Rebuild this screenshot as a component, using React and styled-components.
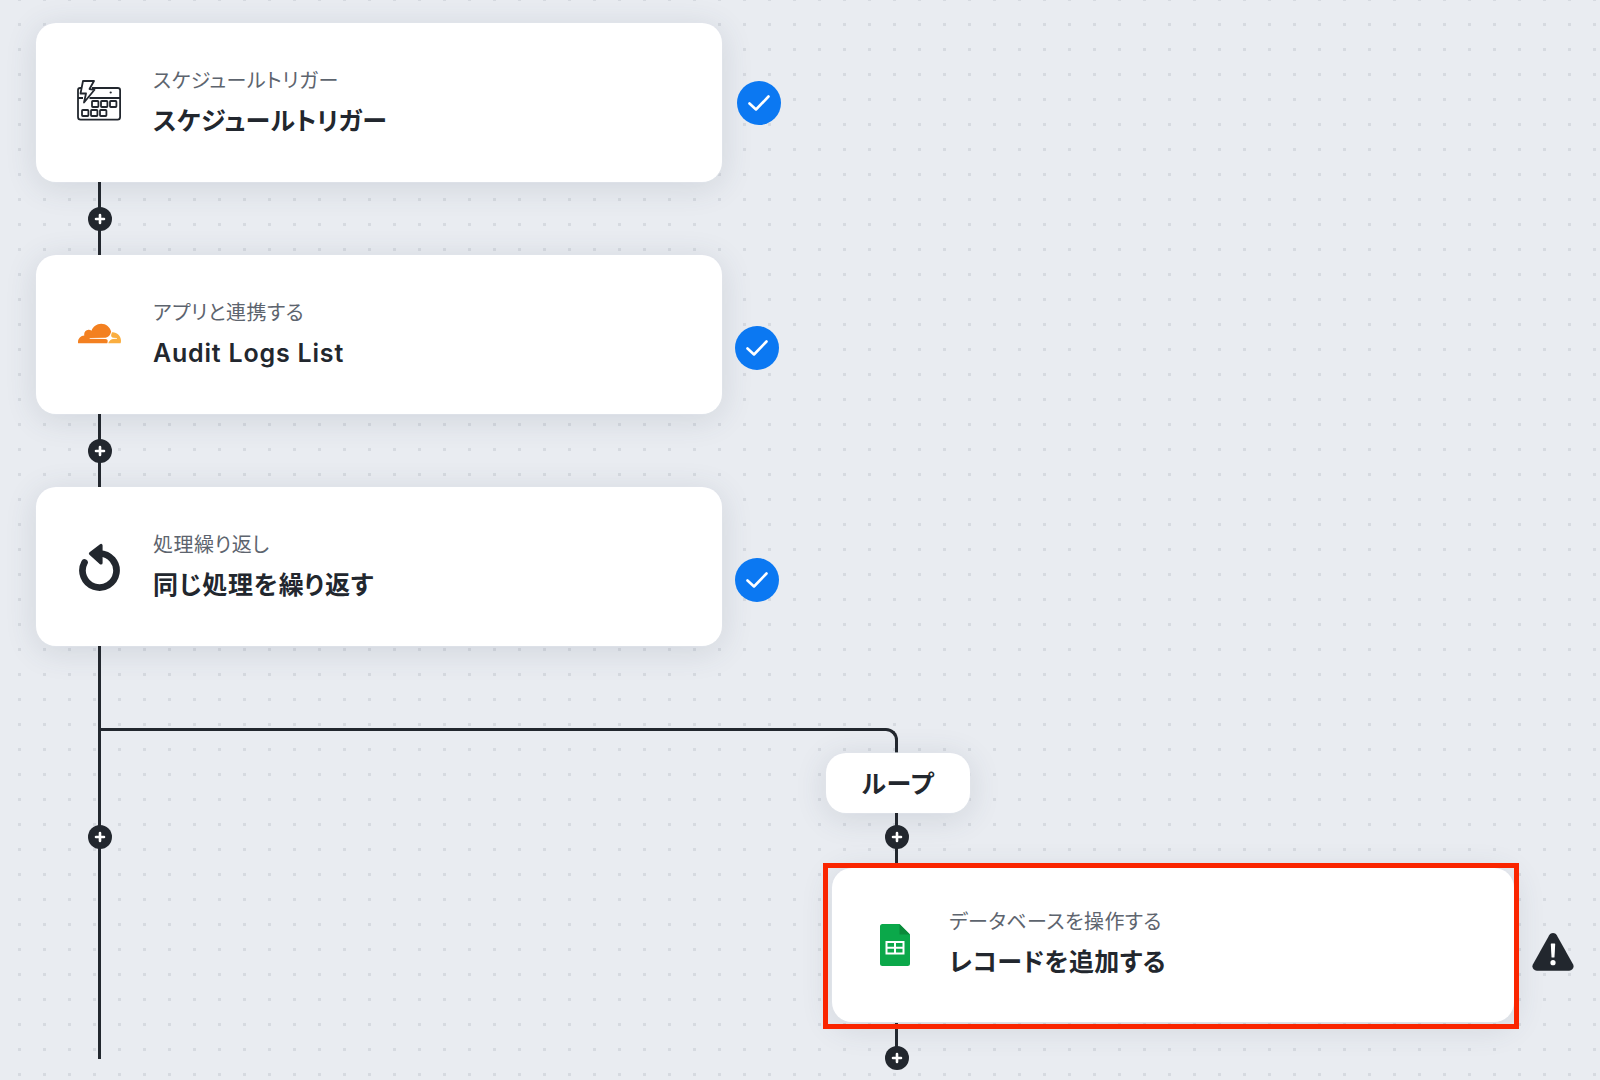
import React from "react";
import styled, { createGlobalStyle } from "styled-components";

const FONT = `Inter, "Noto Sans CJK JP", "Noto Sans", sans-serif`;
const INK = "#22272e";

const Global = createGlobalStyle`
  html, body { margin: 0; padding: 0; }
  body {
    font-family: ${FONT};
    font-feature-settings: "palt";
    background: #e9ecf1;
  }
`;

const Canvas = styled.main`
  position: relative;
  width: 1600px;
  height: 1080px;
  overflow: hidden;
  box-sizing: border-box;
  padding: 23px 0 0 36px;
  background-color: #e9ecf1;
  background-image: radial-gradient(circle, #d6dae0 1.4px, transparent 1.9px);
  background-size: 25px 25px;
  background-position: 7px 12px;
`;

const Step = styled.section`
  display: flex;
  align-items: center;
  gap: ${(p) => p.$gap}px;
`;

const Card = styled.article`
  width: ${(p) => p.$width || 686}px;
  height: ${(p) => p.$height || 159}px;
  box-sizing: border-box;
  display: flex;
  align-items: center;
  padding-left: 41px;
  background: #fff;
  border-radius: 20px;
  box-shadow: 0 0 0 1px rgba(225, 229, 235, 0.6), 0 5px 32px rgba(60, 70, 90, 0.14);
`;

const IconSlot = styled.div`
  width: 44px;
  height: 48px;
  flex: none;
  display: flex;
  align-items: center;
  justify-content: center;
  margin-right: 32px;
  transform: translateY(${(p) => p.$shift || 0}px);
`;

const Texts = styled.div`
  display: flex;
  flex-direction: column;
  gap: 10px;
  transform: translateY(${(p) => p.$shift || 0}px);
`;

const Label = styled.div`
  font-size: 20px;
  line-height: 27px;
  font-weight: 400;
  letter-spacing: 0.5px;
  color: #5d646e;
`;

const Title = styled.div`
  font-size: 25px;
  line-height: 32px;
  font-weight: 600;
  letter-spacing: ${(p) => p.$tracking}px;
  color: ${INK};
`;

const Badge = styled.div`
  width: 44px;
  height: 44px;
  flex: none;
  border-radius: 50%;
  background: #0b78f2;
  display: flex;
  align-items: center;
  justify-content: center;
  transform: translateY(${(p) => p.$shift}px);
`;

const Connector = styled.div`
  position: relative;
  width: 3px;
  height: 73px;
  margin-left: 62px;
  background: ${INK};
`;

const PlusDot = styled.button`
  position: absolute;
  left: ${(p) => p.$left ?? 1.5}px;
  top: ${(p) => p.$top}px;
  width: 24px;
  height: 24px;
  margin-left: -12px;
  padding: 0;
  border: 0;
  border-radius: 50%;
  background: ${INK};
  display: flex;
  align-items: center;
  justify-content: center;
`;

const Branching = styled.div`
  position: relative;
  margin-left: 62px;
  width: 1500px;
  height: 413px;
  box-sizing: border-box;
  border-left: 3px solid ${INK};
`;

const LoopLane = styled.div`
  display: flex;
  flex-direction: column;
  align-items: flex-start;
  padding-top: 82px;
`;

const Elbow = styled.div`
  width: 797px;
  height: 25px;
  box-sizing: border-box;
  border-top: 3px solid ${INK};
  border-right: 3px solid ${INK};
  border-top-right-radius: 12px;
`;

const LoopColumn = styled.div`
  margin-left: 722px;
  display: flex;
  flex-direction: column;
  align-items: flex-start;
`;

const Pill = styled.div`
  width: 144px;
  height: 60px;
  margin-left: 3px;
  border-radius: 20px;
  background: #fff;
  display: flex;
  align-items: center;
  justify-content: center;
  padding-bottom: 3px;
  box-sizing: border-box;
  font-size: 25px;
  font-weight: 600;
  letter-spacing: 0.8px;
  color: ${INK};
  box-shadow: 0 0 0 1px rgba(225, 229, 235, 0.6), 0 5px 32px rgba(60, 70, 90, 0.14);
`;

const LaneLine = styled.div`
  position: relative;
  width: 3px;
  height: ${(p) => p.$height}px;
  margin-left: 72px;
  margin-top: ${(p) => p.$overlap || 0}px;
  background: ${INK};
`;

const SelectedRow = styled.div`
  position: relative;
  z-index: 1;
  display: flex;
  align-items: flex-start;
  gap: 13px;
`;

const Selected = styled.div`
  width: 696px;
  height: 166px;
  box-sizing: border-box;
  padding: 5px 5px 7px 9px;
  outline: 5px solid #fa2500;
  outline-offset: -5px;
  display: flex;
`;

const WarnMark = styled.div`
  margin-top: 70px;
  line-height: 0;
`;

const Plus = () => (
  <svg width="12" height="12" viewBox="0 0 12 12">
    <path d="M6 2v8M2 6h8" stroke="#fff" strokeWidth="2.6" strokeLinecap="round" />
  </svg>
);

const Check = () => (
  <svg width="24" height="20" viewBox="0 0 24 20" fill="none">
    <path d="M2.500 10.500 9 16.500 21.500 3.500" stroke="#fff" strokeWidth="2.600" strokeLinecap="round" strokeLinejoin="round" />
  </svg>
);

const CalendarBolt = () => (
  <svg width="44" height="41" viewBox="0 0 44 41" fill="none" stroke={INK} strokeWidth="1.8" strokeLinejoin="round">
    <path d="M4 8H3.200C1.800 8 1 8.800 1 10.200V37c0 1.600 1 2.600 2.600 2.600h37c1.600 0 2.500-1 2.500-2.600V10.200C43.100 8.800 42.200 8 40.800 8H15" />
    <path d="M1 18h5M12.500 18H43" />
    <path d="M6 1H17L12.500 9 17.500 9.800 7 22.500 9 13.500H3.500z" fill="#fff" />
    <circle cx="33.700" cy="12.500" r="1.100" fill={INK} stroke="none" />
    <rect x="15" y="21" width="6.400" height="6" rx="0.800" />
    <rect x="24" y="21" width="6.400" height="6" rx="0.800" />
    <rect x="33" y="21" width="6.400" height="6" rx="0.800" />
    <rect x="5" y="30" width="6.400" height="6" rx="0.800" />
    <rect x="14" y="30" width="6.400" height="6" rx="0.800" />
    <rect x="23" y="30" width="6.400" height="6" rx="0.800" />
  </svg>
);

const Cloudflare = () => (
  <svg width="43" height="43" viewBox="0 0 24 24">
    <path fill="#f38020" d="M16.5088 16.8447c.1475-.5068.0908-.9707-.1553-1.3154-.2246-.3164-.6045-.499-1.0615-.5205l-8.6592-.1123a.1559.1559 0 0 1-.1333-.0713c-.0283-.042-.0351-.0986-.021-.1553.0278-.084.1123-.1484.2036-.1562l8.7359-.1123c1.0351-.0489 2.1601-.8868 2.5537-1.9136l.499-1.3013c.0215-.0561.0293-.1128.0147-.168-.5625-2.5463-2.835-4.4453-5.5499-4.4453-2.5039 0-4.6284 1.6177-5.3876 3.8614-.4927-.3658-1.1187-.5625-1.794-.499-1.2026.119-2.1665 1.083-2.2861 2.2856-.0283.31-.0069.6128.0635.894C1.5683 13.171 0 14.7754 0 16.7508c0 .1748.0142.3515.0352.5273.0141.083.0844.1475.1689.1475h15.9814c.0909 0 .1758-.0645.2032-.1553l.12-.4256z" />
    <path fill="#faae40" d="M19.2656 11.2813c-.0771 0-.1611 0-.2383.0112-.0566 0-.1054.0415-.127.0976l-.3378 1.1744c-.1475.5068-.0918.9707.1543 1.3164.2256.3164.6055.498 1.0625.5195l1.8437.1133c.0557 0 .1055.0263.1329.0703.0283.043.0351.1074.0214.1562-.0283.084-.1132.1485-.204.1553l-1.921.1123c-1.041.0488-2.1582.8867-2.5527 1.914l-.1406.3585c-.0283.0713.0215.1416.0986.1416h6.5977c.0771 0 .1474-.0489.169-.126.1122-.4082.1757-.837.1757-1.2803 0-2.6025-2.125-4.727-4.7344-4.727" />
  </svg>
);

const Replay = () => (
  <svg width="41" height="48" viewBox="0 0 41 48" fill="none">
    <path d="M5.500 19.500A17 17 0 1 0 20.500 10.500" stroke={INK} strokeWidth="6.700" strokeLinecap="round" />
    <path d="M11.500 10.500 22 2.500V20z" fill={INK} stroke={INK} strokeWidth="3.200" strokeLinejoin="round" />
  </svg>
);

const Sheets = () => (
  <svg width="30" height="42" viewBox="0 0 30 42">
    <path fill="#0ba84a" d="M2.500 0H19.500L30 10.500V39.500A2.500 2.500 0 0 1 27.500 42H2.500A2.500 2.500 0 0 1 0 39.500V2.500A2.500 2.500 0 0 1 2.500 0z" />
    <path fill="#0a8a3a" d="M19.500 0 30 10.500H19.500z" />
    <path fill="#fff" d="M5.500 17h19v13.500h-19z" />
    <path fill="#0ba84a" d="M7.500 19h6.500v3.800H7.500zM16 19h6.500v3.800H16zM7.500 24.700h6.500v3.800H7.500zM16 24.700h6.500v3.800H16z" />
  </svg>
);

const Warning = () => (
  <svg width="42" height="38" viewBox="0 0 42 38">
    <path fill={INK} d="M17.200 2.200c1.700-2.900 5.900-2.900 7.600 0l16.200 29c1.600 2.900-.4 6.600-3.800 6.600H4.800C1.400 37.800-.6 34.100 1 31.200z" />
    <path d="M19.400 11h3.200l-.7 13h-1.800z" fill="#fff" stroke="#fff" strokeWidth="1.200" strokeLinejoin="round" />
    <circle cx="21" cy="29.700" r="2.600" fill="#fff" />
  </svg>
);

const steps = [
  { label: "スケジュールトリガー", title: "スケジュールトリガー", tracking: 0.4, Icon: CalendarBolt, gap: 15, badge: 0, icon: -2 },
  { label: "アプリと連携する", title: "Audit Logs List", tracking: 0.8, Icon: Cloudflare, gap: 13, badge: 13, icon: -1 },
  { label: "処理繰り返し", title: "同じ処理を繰り返す", tracking: 0.8, Icon: Replay, gap: 13, badge: 13, icon: 0 },
];

export default function App() {
  return (
    <>
      <Global />
      <Canvas>
        {steps.map(({ label, title, tracking, Icon, gap, badge, icon }, i) => (
          <React.Fragment key={title}>
            <Step $gap={gap}>
              <Card>
                <IconSlot $shift={icon}><Icon /></IconSlot>
                <Texts>
                  <Label>{label}</Label>
                  <Title $tracking={tracking}>{title}</Title>
                </Texts>
              </Card>
              <Badge $shift={badge}><Check /></Badge>
            </Step>
            {i < 2 && (
              <Connector>
                <PlusDot $top={25}><Plus /></PlusDot>
              </Connector>
            )}
          </React.Fragment>
        ))}
        <Branching>
          <PlusDot $left={-1.5} $top={179}><Plus /></PlusDot>
          <LoopLane>
            <Elbow />
            <LoopColumn>
              <Pill>ループ</Pill>
              <LaneLine $height={50}>
                <PlusDot $top={12}><Plus /></PlusDot>
              </LaneLine>
              <SelectedRow>
                <Selected>
                  <Card $width={682} $height={154}>
                    <IconSlot><Sheets /></IconSlot>
                    <Texts $shift={-2}>
                      <Label>データベースを操作する</Label>
                      <Title $tracking={0.4}>レコードを追加する</Title>
                    </Texts>
                  </Card>
                </Selected>
                <WarnMark><Warning /></WarnMark>
              </SelectedRow>
              <LaneLine $height={27} $overlap={-6}>
                <PlusDot $top={23}><Plus /></PlusDot>
              </LaneLine>
            </LoopColumn>
          </LoopLane>
        </Branching>
      </Canvas>
    </>
  );
}
